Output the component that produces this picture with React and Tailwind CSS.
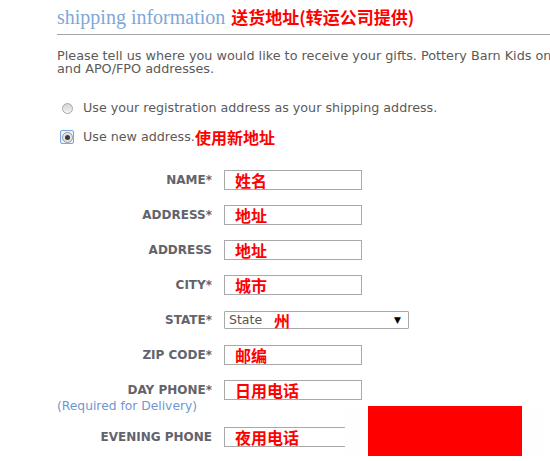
import React from 'react';

const cjk = { fontFamily: '"Noto Sans CJK SC", sans-serif' };
const verdana = { fontFamily: '"DejaVu Sans", Verdana, sans-serif' };

// One form row: right-aligned label, then the input
function Field({ label, value, note, children }) {
    return (
        <div className="flex items-start">
            <div className="w-[155px] shrink-0">
                <div className="h-[20px] flex items-center justify-end text-[12px] font-bold text-[#63636b]">
                    {label}
                </div>
                {note && (
                    <div className="text-[12.3px] leading-[12px] text-[#6f97cf] whitespace-nowrap">{note}</div>
                )}
            </div>
            <div className="ml-[12px]">
                {children || (
                    <div className="w-[138px] h-[20px] border border-[#a9a9a9] bg-white flex items-center pl-[10px]">
                        <span className="text-[16px] font-bold text-[#ff0000] leading-none" style={cjk}>{value}</span>
                    </div>
                )}
            </div>
        </div>
    );
}

function Radio({ checked }) {
    if (checked) {
        return (
            <div className="w-[14px] h-[14px] border border-[#7aa7e0] rounded-[2px] bg-[#eaf2fc] flex items-center justify-center">
                <div className="w-[11px] h-[11px] rounded-full border border-[#9a9a9a] bg-[#e4e4e4] flex items-center justify-center">
                    <div className="w-[5px] h-[5px] rounded-full bg-[#3a3a3a]" />
                </div>
            </div>
        );
    }
    return (
        <div className="w-[14px] h-[14px] flex items-center justify-center">
            <div className="w-[11px] h-[11px] rounded-full border border-[#a8a8a8] bg-gradient-to-b from-[#d4d4d4] to-[#f4f4f4]" />
        </div>
    );
}

export default function App() {
    return (
        <div className="relative w-[550px] h-[461px] bg-white overflow-hidden" style={verdana}>
            <div className="pl-[57px]">
                {/* Heading */}
                <div className="flex items-baseline h-[27px] pt-[7px]">
                    <span className="text-[20px] text-[#7ea8d8] leading-[20px]" style={{ fontFamily: '"Liberation Serif", Georgia, serif' }}>
                        shipping information
                    </span>
                    <span className="ml-[6px] text-[17px] font-bold text-[#ff0000] leading-[20px]" style={cjk}>
                        送货地址(转运公司提供)
                    </span>
                </div>
                <div className="mt-[7px] h-px bg-[#a4a4a4]" />

                {/* Intro */}
                <p className="mt-[14px] text-[12.8px] leading-[13px] text-[#5a5a5a] whitespace-nowrap">
                    Please tell us where you would like to receive your gifts. Pottery Barn Kids only ships
                    <br />
                    and APO/FPO addresses.
                </p>

                {/* Address choice */}
                <div className="mt-[26px] flex items-center pl-[3px] h-[14px]">
                    <Radio />
                    <span className="ml-[9px] text-[12.7px] text-[#5a5a5a]">Use your registration address as your shipping address.</span>
                </div>
                <div className="mt-[15px] flex items-center pl-[3px] h-[14px]">
                    <Radio checked />
                    <span className="ml-[9px] text-[12.7px] text-[#5a5a5a]">Use new address.</span>
                    <span className="text-[16px] font-bold text-[#ff0000] leading-none" style={cjk}>使用新地址</span>
                </div>

                {/* Form */}
                <div className="mt-[26px] flex flex-col gap-[15px]">
                    <Field label="NAME*" value="姓名" />
                    <Field label="ADDRESS*" value="地址" />
                    <Field label="ADDRESS" value="地址" />
                    <Field label="CITY*" value="城市" />
                    <Field label="STATE*">
                        <div className="mt-[1px] w-[185px] h-[18px] border border-[#a9a9a9] rounded-[1px] flex items-center pl-[4px] pr-[7px]">
                            <span className="text-[12.5px] text-[#555]">State</span>
                            <span className="ml-[12px] text-[16px] font-bold text-[#ff0000] leading-none" style={cjk}>州</span>
                            <span className="ml-auto text-[9px] text-black leading-none">▼</span>
                        </div>
                    </Field>
                    <Field label="ZIP CODE*" value="邮编" />
                    <Field label="DAY PHONE*" value="日用电话" note="(Required for Delivery)" />
                    <Field label="EVENING PHONE" value="夜用电话" />
                </div>
            </div>

            {/* Pasted-over redaction */}
            <div className="absolute left-[345px] top-[406px] w-[200px] h-[50px] bg-[#fefefe]">
                <div className="absolute left-[23px] top-0 w-[154px] h-[50px] bg-[#ff0000]" />
            </div>
        </div>
    );
}
